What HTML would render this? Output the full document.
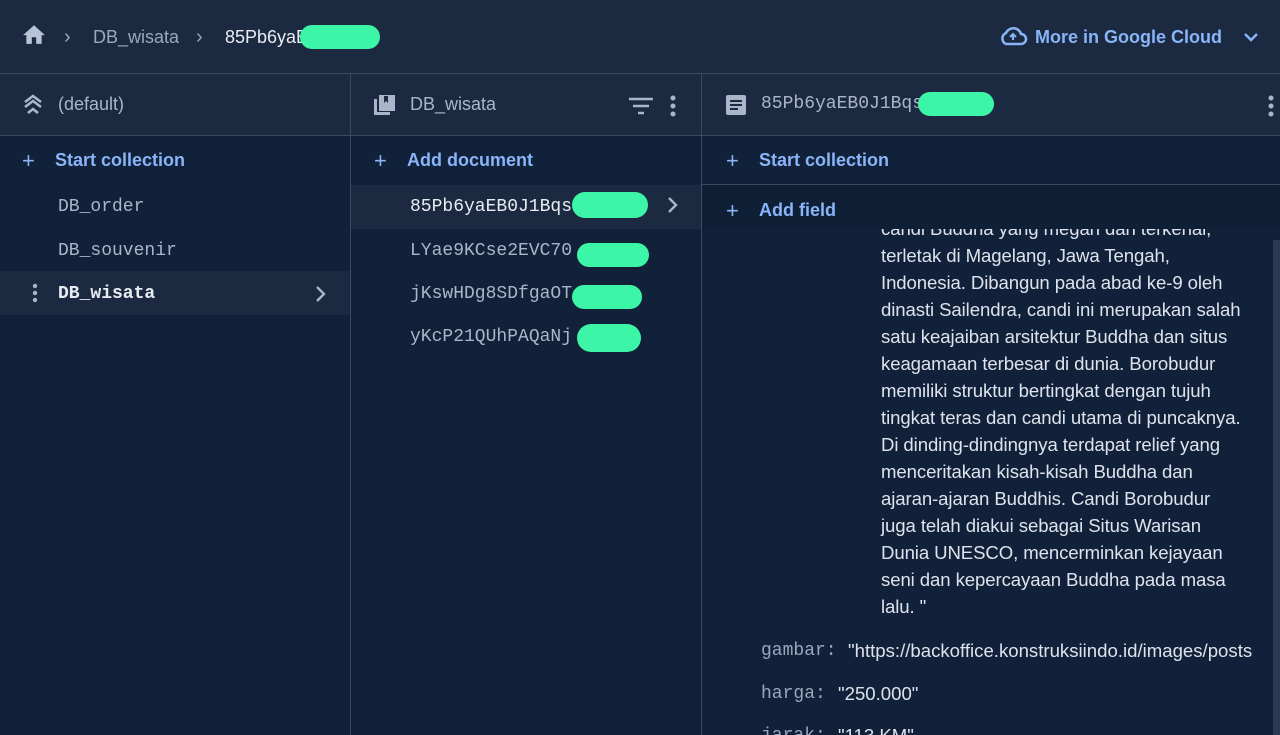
<!DOCTYPE html>
<html><head><meta charset="utf-8"><style>
*{margin:0;padding:0;box-sizing:border-box}
body{width:1280px;height:735px;overflow:hidden;background:#12213a;font-family:"Liberation Sans",sans-serif;position:relative;color:#c9d3e0}
.a{position:absolute;white-space:nowrap}
.top{left:0;top:0;width:1280px;height:74px;background:#1b2a40;border-bottom:1px solid #3a4a60}
.hdr{top:74px;height:62px;background:#1b2a40;border-bottom:1px solid #3a4a60}
.blue{color:#8ab4f8;font-size:18px;font-weight:bold}
.mono{font-family:"Liberation Mono",monospace;font-size:18px}
.blob{background:#3cf5a6;border-radius:14px;height:24px}
.p{left:180px;font-size:18.6px;color:#dde3ec;letter-spacing:-0.1px}
</style></head><body>
<div class="a top"></div>
<svg class="a" style="left:20px;top:22px" width="28" height="24" viewBox="0 0 24 22"><path d="M10 20v-6h4v6h5v-8h3L12 3 2 12h3v8z" fill="#b8c4d6"/></svg>
<div class="a" style="left:64px;top:26px;font-size:20px;color:#9aa8bc">›</div>
<div class="a" style="left:93px;top:27px;font-size:18px;color:#9aa8bc">DB_wisata</div>
<div class="a" style="left:196px;top:26px;font-size:20px;color:#9aa8bc">›</div>
<div class="a" style="left:225px;top:27px;font-size:18px;color:#e8edf4">85Pb6yaE</div>
<div class="a blob" style="left:300px;top:25px;width:80px"></div>
<svg class="a" style="left:998px;top:25px" width="30" height="22" viewBox="0 0 30 22"><path d="M8 19h15a5 5 0 0 0 0-10 8 8 0 0 0-15-1 6 6 0 0 0 0 11z" fill="none" stroke="#8ab4f8" stroke-width="2.5"/><path d="M15 15v-6m-3 3l3-3 3 3" stroke="#8ab4f8" stroke-width="2" fill="none"/></svg>
<div class="a blue" style="left:1035px;top:27px">More in Google Cloud</div>
<svg class="a" style="left:1242px;top:30px" width="18" height="14" viewBox="0 0 18 14"><path d="M3 4l6 6 6-6" stroke="#8ab4f8" stroke-width="2.5" fill="none"/></svg>

<div class="a hdr" style="left:0;width:1280px"></div>
<div class="a" style="left:350px;top:74px;width:1px;height:661px;background:#3a4a60"></div>
<div class="a" style="left:701px;top:74px;width:1px;height:661px;background:#3a4a60"></div>

<svg class="a" style="left:21px;top:93px" width="24" height="24" viewBox="0 0 24 24"><path d="M4 9l8-6 8 6M4 14l8-6 8 6M7 20l5-4 5 4" stroke="#aab6c8" stroke-width="2.6" fill="none"/></svg>
<div class="a" style="left:58px;top:94px;font-size:18px;color:#aab6c8">(default)</div>
<svg class="a" style="left:373px;top:94px" width="24" height="22" viewBox="0 0 24 22"><rect x="6" y="1" width="16" height="16" fill="#aab6c8"/><rect x="1" y="5" width="3" height="16" fill="#aab6c8"/><rect x="1" y="18" width="16" height="3" fill="#aab6c8"/><path d="M15 2v7l-2-2-2 2V2z" fill="#1b2a40"/></svg>
<div class="a" style="left:410px;top:94px;font-size:18px;color:#aab6c8">DB_wisata</div>
<svg class="a" style="left:628px;top:96px" width="26" height="20" viewBox="0 0 26 20"><path d="M1 3h24M5 10h16M10 17h6" stroke="#aab6c8" stroke-width="2.6"/></svg>
<svg class="a" style="left:668px;top:94px" width="10" height="24"><circle cx="5" cy="4" r="2.5" fill="#aab6c8"/><circle cx="5" cy="12" r="2.5" fill="#aab6c8"/><circle cx="5" cy="20" r="2.5" fill="#aab6c8"/></svg>
<svg class="a" style="left:725px;top:94px" width="22" height="22" viewBox="0 0 22 22"><rect x="1" y="1" width="20" height="20" rx="2" fill="#aab6c8"/><path d="M5 7h12M5 11h12M5 15h8" stroke="#1b2a40" stroke-width="2"/></svg>
<div class="a mono" style="left:761px;top:94px;color:#aab6c8">85Pb6yaEB0J1Bqs</div>
<div class="a blob" style="left:918px;top:92px;width:76px"></div>
<svg class="a" style="left:1266px;top:94px" width="10" height="24"><circle cx="5" cy="4" r="2.5" fill="#aab6c8"/><circle cx="5" cy="12" r="2.5" fill="#aab6c8"/><circle cx="5" cy="20" r="2.5" fill="#aab6c8"/></svg>

<div class="a blue" style="left:22px;top:148px;font-size:22px;font-weight:normal">+</div>
<div class="a blue" style="left:55px;top:150px">Start collection</div>
<div class="a mono" style="left:58px;top:197px;color:#aab6c8">DB_order</div>
<div class="a mono" style="left:58px;top:241px;color:#aab6c8">DB_souvenir</div>
<div class="a" style="left:0;top:271px;width:350px;height:44px;background:#1b2a40"></div>
<svg class="a" style="left:31px;top:283px" width="8" height="22"><circle cx="4" cy="3" r="2.2" fill="#aab6c8"/><circle cx="4" cy="10" r="2.2" fill="#aab6c8"/><circle cx="4" cy="17" r="2.2" fill="#aab6c8"/></svg>
<div class="a mono" style="left:58px;top:284px;color:#e8edf4;font-weight:bold">DB_wisata</div>
<svg class="a" style="left:314px;top:284px" width="14" height="20"><path d="M3 3l7 7-7 7" stroke="#aab6c8" stroke-width="2.4" fill="none"/></svg>

<div class="a blue" style="left:374px;top:148px;font-size:22px;font-weight:normal">+</div>
<div class="a blue" style="left:407px;top:150px">Add document</div>
<div class="a" style="left:351px;top:185px;width:350px;height:44px;background:#1b2a40"></div>
<div class="a mono" style="left:410px;top:197px;color:#e8edf4">85Pb6yaEB0J1Bqs</div>
<div class="a blob" style="left:572px;top:192px;width:76px;height:26px"></div>
<svg class="a" style="left:666px;top:196px" width="14" height="20"><path d="M3 2l7 7-7 7" stroke="#aab6c8" stroke-width="2.4" fill="none"/></svg>
<div class="a mono" style="left:410px;top:241px;color:#aab6c8">LYae9KCse2EVC70</div>
<div class="a blob" style="left:577px;top:243px;width:72px"></div>
<div class="a mono" style="left:410px;top:284px;color:#aab6c8">jKswHDg8SDfgaOT</div>
<div class="a blob" style="left:572px;top:285px;width:70px"></div>
<div class="a mono" style="left:410px;top:327px;color:#aab6c8">yKcP21QUhPAQaNj</div>
<div class="a blob" style="left:577px;top:324px;width:64px;height:28px"></div>

<div class="a blue" style="left:726px;top:148px;font-size:22px;font-weight:normal">+</div>
<div class="a blue" style="left:759px;top:150px">Start collection</div>
<div class="a" style="left:702px;top:184px;width:578px;height:1px;background:#3a4a60"></div>
<div class="a" style="left:702px;top:185px;width:578px;height:44px;background:#0f1f35"></div>
<div class="a blue" style="left:726px;top:198px;font-size:22px;font-weight:normal">+</div>
<div class="a blue" style="left:759px;top:200px">Add field</div>

<div class="a" style="left:701px;top:229px;width:572px;height:506px;overflow:hidden">
<div class="a p" style="top:-11px">candi Buddha yang megah dan terkenal,</div>
<div class="a p" style="top:16px">terletak di Magelang, Jawa Tengah,</div>
<div class="a p" style="top:43px">Indonesia. Dibangun pada abad ke-9 oleh</div>
<div class="a p" style="top:70px">dinasti Sailendra, candi ini merupakan salah</div>
<div class="a p" style="top:97px">satu keajaiban arsitektur Buddha dan situs</div>
<div class="a p" style="top:124px">keagamaan terbesar di dunia. Borobudur</div>
<div class="a p" style="top:151px">memiliki struktur bertingkat dengan tujuh</div>
<div class="a p" style="top:178px">tingkat teras dan candi utama di puncaknya.</div>
<div class="a p" style="top:205px">Di dinding-dindingnya terdapat relief yang</div>
<div class="a p" style="top:232px">menceritakan kisah-kisah Buddha dan</div>
<div class="a p" style="top:259px">ajaran-ajaran Buddhis. Candi Borobudur</div>
<div class="a p" style="top:286px">juga telah diakui sebagai Situs Warisan</div>
<div class="a p" style="top:313px">Dunia UNESCO, mencerminkan kejayaan</div>
<div class="a p" style="top:340px">seni dan kepercayaan Buddha pada masa</div>
<div class="a p" style="top:367px">lalu. "</div>
<div class="a mono" style="left:60px;top:412px;color:#9aa8bc">gambar:</div>
<div class="a" style="left:147px;top:411px;font-size:18.6px;color:#dde3ec">"https://backoffice.konstruksiindo.id/images/posts</div>
<div class="a mono" style="left:60px;top:455px;color:#9aa8bc">harga:</div>
<div class="a" style="left:137px;top:454px;font-size:18.6px;color:#dde3ec">"250.000"</div>
<div class="a mono" style="left:60px;top:497px;color:#9aa8bc">jarak:</div>
<div class="a" style="left:137px;top:496px;font-size:18.6px;color:#dde3ec">"113 KM"</div>
</div>
<div class="a" style="left:1273px;top:240px;width:7px;height:495px;background:#2a3a52"></div>
</body></html>
